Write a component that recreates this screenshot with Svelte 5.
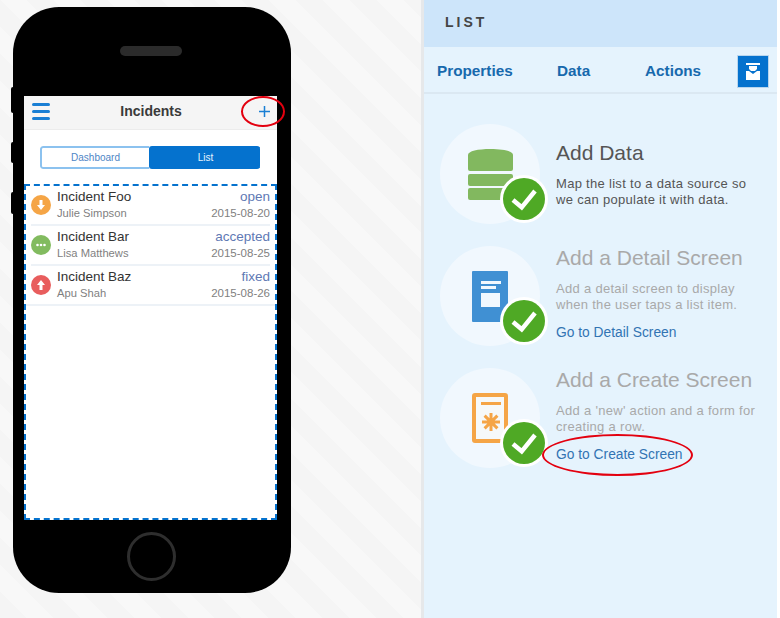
<script>
  const incidents = [
    { title: 'Incident Foo', who: 'Julie Simpson', status: 'open', date: '2015-08-20', color: '#f5a546', kind: 'down' },
    { title: 'Incident Bar', who: 'Lisa Matthews', status: 'accepted', date: '2015-08-25', color: '#82bb5f', kind: 'dots' },
    { title: 'Incident Baz', who: 'Apu Shah', status: 'fixed', date: '2015-08-26', color: '#e85d5d', kind: 'up' }
  ];

  const steps = [
    { title: 'Add Data', lines: ['Map the list to a data source so', 'we can populate it with data.'], icon: 'data', active: true },
    { title: 'Add a Detail Screen', lines: ['Add a detail screen to display', 'when the user taps a list item.'], link: 'Go to Detail Screen', icon: 'detail' },
    { title: 'Add a Create Screen', lines: ["Add a 'new' action and a form for", 'creating a row.'], link: 'Go to Create Screen', icon: 'create', circled: true }
  ];
</script>

<div class="page">
  <div class="stage">
    <div class="phone">
      <span class="side side-a"></span>
      <span class="side side-b"></span>
      <span class="side side-c"></span>
      <div class="earpiece-zone"><span class="earpiece"></span></div>
      <div class="screen">
        <header class="bar">
          <span class="burger"><i></i><i></i><i></i></span>
          <span class="bar-title">Incidents</span>
          <svg class="plus" width="11" height="11" viewBox="0 0 11 11"><path d="M5.5 0v11M0 5.5h11" stroke="#1a7fd4" stroke-width="1.5" /></svg>
          <span class="ring ring-plus"></span>
        </header>
        <div class="segments">
          <span class="seg">Dashboard</span>
          <span class="seg on">List</span>
        </div>
        <div class="list">
          {#each incidents as item}
            <div class="row">
              <svg class="badge" width="20" height="20" viewBox="0 0 20 20">
                <circle cx="10" cy="10" r="10" fill={item.color} />
                {#if item.kind === 'down'}
                  <path d="M8.5 5h3v5h2.5L10 15l-4-5h2.5z" fill="#fff" />
                {:else if item.kind === 'up'}
                  <path d="M8.5 15h3v-5h2.5L10 5l-4 5h2.5z" fill="#fff" />
                {:else}
                  <circle cx="6.5" cy="10" r="1.3" fill="#fff" /><circle cx="10" cy="10" r="1.3" fill="#fff" /><circle cx="13.5" cy="10" r="1.3" fill="#fff" />
                {/if}
              </svg>
              <div class="row-main">
                <div class="row-line">
                  <span class="row-title">{item.title}</span>
                  <span class="row-status">{item.status}</span>
                </div>
                <div class="row-line small">
                  <span class="row-who">{item.who}</span>
                  <span>{item.date}</span>
                </div>
              </div>
            </div>
          {/each}
        </div>
      </div>
      <div class="home-zone"><span class="home"></span></div>
    </div>
  </div>

  <aside class="panel">
    <div class="panel-head">LIST</div>
    <nav class="tabs">
      <span class="tab">Properties</span>
      <span class="tab">Data</span>
      <span class="tab">Actions</span>
      <span class="tab-icon">
        <svg width="14" height="17" viewBox="0 0 14 17">
          <path d="M0 0h14v2H0z" fill="#fff" />
          <path d="M3 3h8v3L9 8H5L3 6z" fill="#fff" />
          <path d="M0 8h3l4 3 4-3h3v9H0z" fill="#fff" />
        </svg>
      </span>
    </nav>
    <div class="steps">
      {#each steps as step}
        <section class="step" class:active={step.active}>
          <div class="disc">
            {#if step.icon === 'data'}
              <svg class="art art-data" width="45" height="51" viewBox="0 0 45 51">
                <path d="M0 6C0 2 10 0 22.5 0S45 2 45 6v14a2 2 0 0 1-2 2H2a2 2 0 0 1-2-2z" fill="#82b85f" />
                <rect x="0" y="25" width="45" height="12" rx="2" fill="#82b85f" />
                <rect x="0" y="39" width="45" height="12" rx="2" fill="#82b85f" />
              </svg>
            {:else if step.icon === 'detail'}
              <svg class="art" width="36" height="51" viewBox="0 0 36 51">
                <rect width="36" height="51" rx="1" fill="#4090d3" />
                <path d="M9 10h20v3H9zM9 15h15v3H9z" fill="#f1f8fe" />
                <rect x="9" y="22" width="19" height="14" fill="#f1f8fe" />
              </svg>
            {:else}
              <svg class="art" width="36" height="50" viewBox="0 0 36 50">
                <rect x="2" y="2" width="32" height="46" fill="#f6f9f9" stroke="#f5a546" stroke-width="4" rx="1" />
                <path d="M9 9h20v3H9z" fill="#f5a546" />
                <path d="M19 20v18M10 29h18M12.6 22.6l12.8 12.8M25.4 22.6L12.6 35.4" stroke="#f5a546" stroke-width="3" />
              </svg>
            {/if}
            <svg class="check" width="50" height="50" viewBox="0 0 50 50">
              <circle cx="25" cy="25" r="24" fill="#fff" />
              <circle cx="25" cy="25" r="21" fill="#4fa925" />
              <path d="M14 26l8.7 7.3L36 17" fill="none" stroke="#fff" stroke-width="4.5" />
            </svg>
          </div>
          <div class="copy">
            <h2>{step.title}</h2>
            <p>{step.lines[0]}<br />{step.lines[1]}</p>
            {#if step.link}
              <span class="link-wrap">
                <span class="link">{step.link}</span>
                {#if step.circled}<span class="ring ring-link"></span>{/if}
              </span>
            {/if}
          </div>
        </section>
      {/each}
    </div>
  </aside>
</div>

<style>
  :global(body) {
    margin: 0;
    font-family: "Liberation Sans", Arial, sans-serif;
  }

  .page {
    display: flex;
    width: 780px;
    height: 618px;
    overflow: hidden;
    background: #fff;
  }

  .stage {
    width: 424px;
    flex: none;
    padding: 7px 0 0 13px;
    box-sizing: border-box;
    background: repeating-linear-gradient(45deg, #f5f5f5 0 19px, #f8f8f8 19px 38px);
    border-right: 3px solid #e6e8ea;
  }

  .phone {
    position: relative;
    width: 278px;
    height: 586px;
    background: #000;
    border-radius: 46px;
    display: flex;
    flex-direction: column;
  }

  .side {
    position: absolute;
    left: -2px;
    width: 2px;
    background: #000;
    border-radius: 2px 0 0 2px;
  }

  .side-a { top: 80px; height: 26px; }
  .side-b { top: 135px; height: 21px; }
  .side-c { top: 185px; height: 22px; }

  .earpiece-zone {
    height: 89px;
    padding: 39px 3px 0 0;
    box-sizing: border-box;
    display: flex;
    justify-content: center;
  }

  .earpiece {
    width: 62px;
    height: 10px;
    border-radius: 5px;
    background: #2b2b2b;
  }

  .screen {
    width: 253px;
    height: 424px;
    margin-left: 11px;
    background: #fff;
    flex: none;
  }

  .bar {
    position: relative;
    height: 34px;
    background: #f5f5f5;
    border-bottom: 1px solid #ececec;
    display: grid;
    grid-template-columns: 1fr auto 1fr;
    align-items: center;
    padding: 0 7px 3px 8px;
    box-sizing: border-box;
  }

  .burger {
    display: flex;
    flex-direction: column;
    gap: 3.5px;
    width: 18px;
    margin-top: 1px;
  }

  .burger i {
    height: 3.5px;
    background: #1a7fd4;
    border-radius: 2px;
  }

  .bar-title {
    font-size: 14px;
    font-weight: bold;
    color: #3a3a3a;
  }

  .plus {
    justify-self: end;
  }

  .ring {
    position: absolute;
    border: 2px solid #e3000f;
    border-radius: 50%;
    box-sizing: border-box;
    pointer-events: none;
  }

  .ring-plus {
    left: 217px;
    top: 0;
    width: 44px;
    height: 31px;
  }

  .segments {
    display: flex;
    margin: 16px 17px 15px 16px;
    height: 23px;
    border-radius: 3px;
    overflow: hidden;
    font-size: 10px;
  }

  .seg {
    width: 109px;
    display: flex;
    align-items: center;
    justify-content: center;
    color: #4f86c6;
    border: 2px solid #8cc2ef;
    border-right: 0;
    border-radius: 3px 0 0 3px;
    box-sizing: border-box;
  }

  .seg.on {
    width: 111px;
    color: #e8f3fc;
    background: #0572ce;
    border-color: #0572ce;
  }

  .list {
    height: 336px;
    box-sizing: border-box;
    border: 2px dashed #0572ce;
  }

  .row {
    display: flex;
    align-items: center;
    gap: 6px;
    height: 40px;
    margin: 0 5px;
    box-sizing: border-box;
    border-bottom: 2px solid #edf2f7;
  }

  .row:last-child {
    margin: 0;
    padding: 0 5px;
  }

  .badge {
    flex: none;
    margin-top: -1px;
  }

  .row-main {
    flex: 1;
    min-width: 0;
    margin-top: -2px;
  }

  .row-line {
    display: flex;
    justify-content: space-between;
    align-items: baseline;
    font-size: 13.5px;
    line-height: 17px;
  }

  .row-line.small {
    font-size: 11.5px;
    line-height: 16px;
    color: #7f7f7f;
  }

  .row-who {
    font-size: 11.2px;
  }

  .row-title {
    color: #333;
  }

  .row-status {
    color: #6079b4;
  }

  .home-zone {
    flex: 1;
    display: flex;
    align-items: flex-start;
    justify-content: center;
    padding: 12px 2px 0 0;
    box-sizing: border-box;
  }

  .home {
    width: 49px;
    height: 49px;
    border: 3px solid #2e2e2e;
    border-radius: 50%;
    box-sizing: border-box;
  }

  .panel {
    width: 353px;
    flex: none;
    background: #e5f3fd;
    display: flex;
    flex-direction: column;
  }

  .panel-head {
    height: 47px;
    background: #cde5fa;
    display: flex;
    align-items: center;
    padding-left: 21px;
    padding-bottom: 4px;
    box-sizing: border-box;
    font-size: 14px;
    font-weight: bold;
    letter-spacing: 3px;
    color: #444;
  }

  .tabs {
    height: 47px;
    box-sizing: border-box;
    border-bottom: 2px solid #dbe8f2;
    display: flex;
    align-items: center;
    padding: 3px 0 0 13px;
    margin-bottom: 30px;
  }

  .tab {
    font-size: 15.3px;
    font-weight: bold;
    color: #1769ad;
  }

  .tab:nth-child(1) { width: 120px; }
  .tab:nth-child(2) { width: 88px; }
  .tab:nth-child(3) { width: 92px; }

  .tab-icon {
    width: 32px;
    height: 33px;
    background: #0572ce;
    border: 1px solid #b9d6ee;
    box-sizing: border-box;
    display: flex;
    align-items: center;
    justify-content: center;
  }

  .steps {
    display: flex;
    flex-direction: column;
    gap: 22px;
    padding-left: 16px;
  }

  .step {
    display: flex;
    gap: 16px;
    height: 100px;
  }

  .disc {
    position: relative;
    width: 100px;
    height: 100px;
    flex: none;
    border-radius: 50%;
    background: #f1f8fe;
  }

  .art {
    position: absolute;
    left: 32px;
    top: 25px;
  }

  .art-data {
    left: 28px;
  }

  .check {
    position: absolute;
    left: 59px;
    top: 50px;
  }

  .copy {
    margin-top: -2px;
    color: #a9a9a9;
    min-width: 0;
  }

  .copy h2 {
    margin: 0;
    font-size: 21px;
    font-weight: normal;
    line-height: 28px;
    white-space: nowrap;
  }

  .copy p {
    margin: 9px 0 10px;
    font-size: 13px;
    line-height: 16px;
    letter-spacing: 0.3px;
    white-space: nowrap;
  }

  .active .copy {
    margin-top: 15px;
    color: #555;
  }

  .link-wrap {
    position: relative;
    display: block;
    width: max-content;
    font-size: 13.8px;
    line-height: 20px;
  }

  .link {
    color: #3274b3;
    white-space: nowrap;
  }

  .ring-link {
    left: -14px;
    top: -11px;
    width: 151px;
    height: 42px;
  }
</style>
